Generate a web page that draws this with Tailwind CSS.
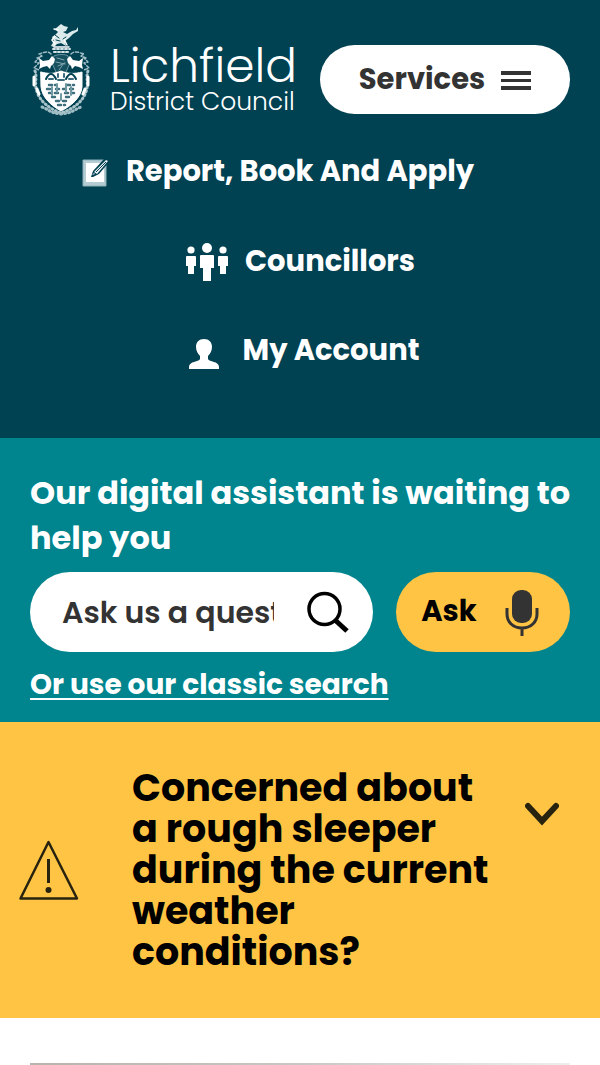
<!DOCTYPE html>
<html lang="en">
<head>
<meta charset="utf-8">
<meta name="viewport" content="width=device-width, initial-scale=1">
<title>Lichfield District Council</title>
<script src="https://cdn.jsdelivr.net/npm/@tailwindcss/browser@4"></script>
</head>
<body class="bg-white font-['Poppins','Inter',sans-serif]">
<header class="bg-[#004152] px-[30px] pt-[22px] pb-[43px] text-white">
  <div class="flex items-start justify-between">
    <a href="#" class="flex items-center gap-4" aria-label="Lichfield District Council home">
      <svg class="h-[95px] w-16 shrink-0" viewBox="11 7 62 95" fill="none" stroke="#fff" stroke-linecap="round" stroke-linejoin="round" aria-hidden="true">
        <path d="M41 9l3 2 4 1-2 4-3 1 4 2 5-3 4-1 2-3 0 4-5 3-4 4-4 3 1 5-5-3-4 1-3 3-3-1 3-5-2-4 3-2 3-3-3-3z" fill="#dceaec" stroke="none"/>
        <path d="M35 29l-3-4 3-4M47 30l-3-6M38 15l-4-1M34 32h15" stroke-width="1.500"/>
        <path d="M35 20l4 3M36 25l4 1M43 24l3-2" stroke="#004152" stroke-width="1"/>
        <path d="M33 34h17M34 37h15" stroke="#d5e3e6" stroke-width="2" stroke-dasharray="2 2"/>
        <path d="M34 41c3-2 12-2 14 0l2 7-4 9-5 2-5-2-4-9z" stroke="#6f98a4" stroke-width="1" fill="#17505f"/>
        <path d="M37 43l7 2M36 47l9 2M38 51l7-3M39 55l5-7" stroke="#7fa5af" stroke-width="1"/>
        <path d="M31 39c-4-4-8-1-12 0l3 2-5 2M51 39c4-4 9-1 13 0l-3 2 5 2M20 42l-5 5 4 1-5 5 5 2M63 42l5 5-4 1 5 5-5 2" stroke="#9fbdc4" stroke-width="1.500" stroke-dasharray="3 2"/>
        <path d="M19 43l4 3 6-1 3-4 3 3-1 4-3 3-1 3-3-3-4 1-4 2 1-4zM63 43l-4 3-6-1-3-4-3 3 1 4 3 3 1 3 3-3 4 1 4 2-1-4z" fill="#fff" stroke="none"/>
        <path d="M15 56c2 5 0 11 1 17 2 12 13 21 25 25 13-4 24-13 26-25 1-7-1-12 1-17" stroke="#a9c5cb" stroke-width="3" stroke-dasharray="1 3"/>
        <path d="M14 62v8M68 62v8M17 74l2 5M65 74l-2 5" stroke-width="3"/>
        <path d="M21 57c7 2 13 2 20-1 7 3 14 3 21 1v15c-1 11-11 19-21 24-9-5-19-13-20-24z" fill="#fff" stroke="#fff"/>
        <path d="M26 64c2-4 3-5 5-5s3 1 5 5M46 64c2-4 3-5 5-5s3 1 5 5" stroke="#004152" stroke-width="2"/>
        <path d="M29 64h4M49 64h4M38 59v3M44 59v3M38 65h6" stroke="#39697a" stroke-width="2"/>
        <path d="M29 70h7M47 70h7M27 74h6M50 74h6M36 74h4M43 74h4M29 78h9M45 78h9M32 82h5M46 82h5M36 86h4M43 86h4M38 90h7" stroke="#3f6f7d" stroke-width="2.500" stroke-dasharray="3 3"/>
        <path d="M37 69v8M46 69v8M41 79v6M32 72v8M51 72v8" stroke="#7098a3" stroke-width="2"/>
        <path d="M22 92c6 2 8 6 19 7 12-1 14-5 20-7" stroke="#9fbdc4" stroke-width="3" stroke-dasharray="1 3"/>
      </svg>
      <span class="flex flex-col pt-4">
        <span class="text-[47px] font-light leading-[48px]">Lichfield</span>
        <span class="text-[25px] font-light leading-[24px]">District Council</span>
      </span>
    </a>
    <button type="button" class="mt-[23px] flex h-[69px] w-[250px] items-center justify-center gap-4 rounded-full bg-white text-[29px] font-bold text-[#333]">
      <span>Services</span>
      <svg class="mt-[2px] h-[20px] w-[30px]" viewBox="0 0 30 20" fill="#333" aria-hidden="true"><path d="M0 0h30v4H0zM0 8h30v3H0zM0 15h30v4H0z"/></svg>
    </button>
  </div>
  <nav class="flex flex-col items-center pt-[10px]">
    <a href="#" class="mr-11 flex h-[90px] items-center gap-4 text-[29px] font-bold">
      <svg class="mt-[2px] h-[30px] w-7" viewBox="0 0 28 30" aria-hidden="true"><path d="M1 2h23v26H1z" fill="#b5ccd2" stroke="#8fb0b9" stroke-width="1"/><path d="M4 5h18v19H4z" fill="#fff"/><path d="M9 19l2-6L22 1l5-1 1 3-11 13-6 3z" fill="#004152"/><path d="M12 14L24 2l2 1-11 13zM10 17l2-2 1 1z" fill="#e8f2f4"/><path d="M14 14L24 4" stroke="#004152"/></svg>
      <span>Report, Book And Apply</span>
    </a>
    <a href="#" class="flex h-[90px] items-center gap-4 text-[29px] font-bold">
      <svg class="h-[38px] w-[44px]" viewBox="0 0 44 38" fill="#fff" aria-hidden="true"><circle cx="22" cy="5" r="5"/><circle cx="6" cy="7" r="3.600"/><circle cx="38" cy="7" r="3.600"/><path d="M16 12h12q1 0 1 1v12h-3v13h-8V25h-3V13q0-1 1-1zM2 13h8q1 0 1 1v9H9v8H3v-8H1v-9q0-1 1-1zM34 13h8q1 0 1 1v9h-2v8h-6v-8h-2v-9q0-1 1-1z"/></svg>
      <span>Councillors</span>
    </a>
    <a href="#" class="ml-2 flex h-[88px] items-center gap-6 text-[29px] font-bold">
      <svg class="mt-[6px] h-[30px] w-[30px]" viewBox="0 0 30 30" fill="#fff" aria-hidden="true"><path d="M15 0c5 0 8 3 8 8 0 4-2 7-4 9v3c1 3 11 2 11 8v2H0v-2c0-6 10-5 11-8v-3c-2-2-4-5-4-9 0-5 3-8 8-8z"/></svg>
      <span>My Account</span>
    </a>
  </nav>
</header>
<section class="bg-[#00848e] px-[30px] pt-8 pb-[17px] text-white">
  <h2 class="-mr-2 text-[32px] font-bold leading-[45px]"><label for="question">Our digital assistant is waiting to help you</label></h2>
  <form class="mt-3 flex gap-[23px]">
    <div class="flex h-20 min-w-0 flex-1 items-center rounded-full bg-white pl-8 pr-6">
      <input id="question" type="text" placeholder="Ask us a question" class="min-w-0 flex-1 bg-transparent text-[30px] font-semibold text-[#333] outline-none placeholder:text-[#333]">
      <button type="button" aria-label="Search" class="ml-[33px] shrink-0">
        <svg class="h-[42px] w-[42px]" viewBox="0 0 42 42" fill="none" stroke="#000" aria-hidden="true"><circle cx="17.500" cy="18" r="15.500" stroke-width="3.500"/><path d="M28 29l12 11" stroke-width="5"/></svg>
      </button>
    </div>
    <button type="submit" class="flex h-20 w-[174px] shrink-0 items-center justify-center gap-7 rounded-full bg-[#ffc443] pr-[6px] text-[29px] font-bold text-black">
      <span>Ask</span>
      <svg class="mt-[2px] h-[46px] w-[34px]" viewBox="0 0 34 46" fill="none" stroke="#333" aria-hidden="true"><rect x="7" y="0" width="20" height="33" rx="9" fill="#333" stroke="none"/><path d="M2 18v6c0 8 6 14 15 14s15-6 15-14v-6M17 38v8" stroke-width="3"/></svg>
    </button>
  </form>
  <a href="#" class="mt-3 inline-block text-[28px] font-bold leading-[41px] underline decoration-2 underline-offset-4">Or use our classic search</a>
</section>
<section class="flex items-center bg-[#ffc443] pt-[45px] pb-[46px] pl-[19px] pr-[41px] text-black">
  <svg class="h-[60px] w-[60px] shrink-0" viewBox="0 0 60 60" fill="none" stroke="#28230f" aria-hidden="true"><path d="M29.500 2L58 58.500H1.500z" stroke-width="2.500" stroke-linejoin="round"/><path d="M29.500 19v24" stroke-width="3"/><circle cx="29.500" cy="50" r="3" fill="#28230f" stroke="none"/></svg>
  <h2 class="mr-8 ml-[53px] flex-1 text-[38px] font-bold leading-[41px]">Concerned about a rough sleeper during the current weather conditions?</h2>
  <button type="button" aria-label="Show details" class="mt-[35px] self-start">
    <svg class="h-[24px] w-[34px]" viewBox="0 0 34 24" fill="none" stroke="#28230f" stroke-width="6" stroke-linecap="round" aria-hidden="true"><path d="M3 4l14 15L31 4"/></svg>
  </button>
</section>
<main class="px-[30px] pt-[45px]">
  <div class="h-[2px] bg-linear-to-r from-[#b9b3ae] via-[#c9c6c3] to-[#eeeeee]"></div>
</main>
</body>
</html>
